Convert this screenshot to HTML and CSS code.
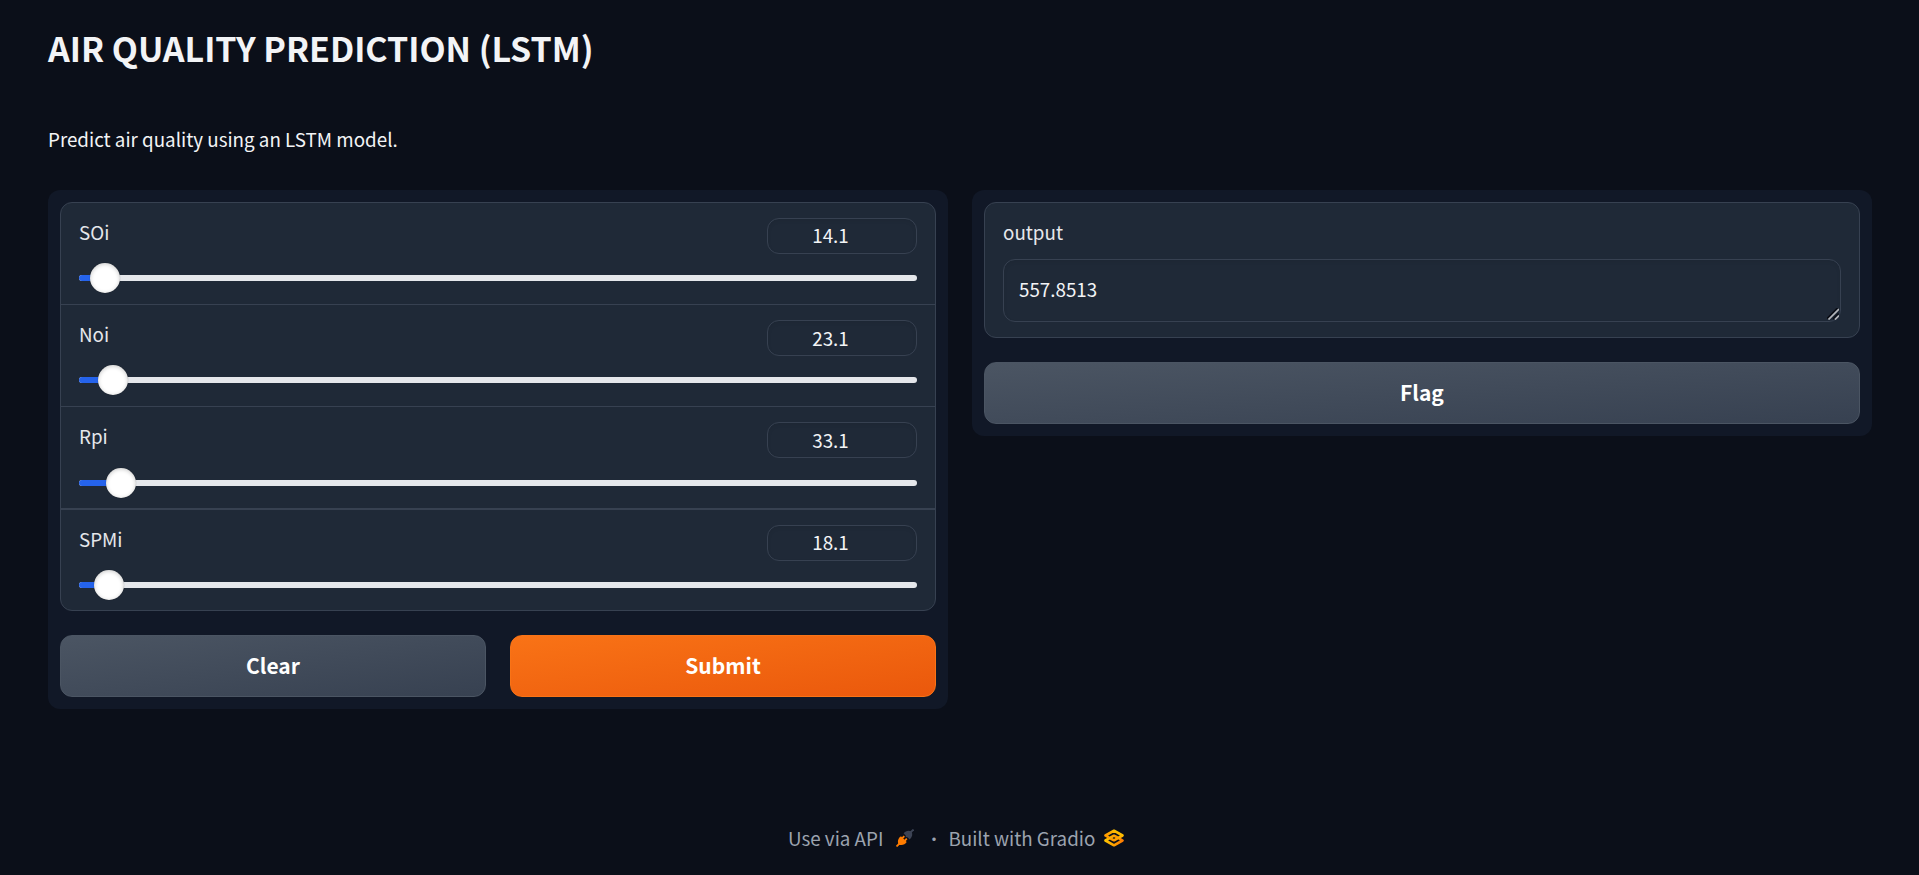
FILE: index.html
```html
<!DOCTYPE html>
<html lang="en">
<head>
<meta charset="utf-8">
<title>AIR QUALITY PREDICTION (LSTM)</title>
<link rel="stylesheet" href="styles.css">
</head>
<body>
<main class="app">
  <h1 class="title">AIR QUALITY PREDICTION (LSTM)</h1>
  <p class="description">Predict air quality using an LSTM model.</p>
  <div class="columns">
    <section class="panel">
      <div class="form">
        <div class="field field-first">
          <div class="head"><span class="label">SOi</span><span class="number">14.1</span></div>
          <div class="track"><span class="fill" style="width:26px"></span><span class="thumb"></span></div>
        </div>
        <div class="field">
          <div class="head"><span class="label">Noi</span><span class="number">23.1</span></div>
          <div class="track"><span class="fill" style="width:34px"></span><span class="thumb"></span></div>
        </div>
        <div class="field field-thick">
          <div class="head"><span class="label">Rpi</span><span class="number">33.1</span></div>
          <div class="track"><span class="fill" style="width:42px"></span><span class="thumb"></span></div>
        </div>
        <div class="field field-last">
          <div class="head"><span class="label">SPMi</span><span class="number">18.1</span></div>
          <div class="track"><span class="fill" style="width:30px"></span><span class="thumb"></span></div>
        </div>
      </div>
      <div class="buttons">
        <button class="btn">Clear</button>
        <button class="btn btn-primary">Submit</button>
      </div>
    </section>
    <section class="panel">
      <div class="output">
        <label class="label" for="out">output</label>
        <div class="textwrap">
          <textarea class="textbox" id="out" readonly>557.8513</textarea>
          <svg class="grip" viewBox="0 0 12 12"><path d="M0 10.500L10.500 0M6 11L11.500 5.500" stroke="#080b12" stroke-width="1.500"/><path d="M1.500 11.500L12 1M8 11.500L12 7.500" stroke="#b4b6ba" stroke-width="1.700"/></svg>
        </div>
      </div>
      <button class="btn">Flag</button>
    </section>
  </div>
  <footer class="footer">
    <span class="api">Use via API</span>
    <svg class="plug" viewBox="0 0 18 18"><path d="M.500 17.500l3.500-3.500" stroke="#ff7c00" stroke-width="1.800"/><path d="M5 7.300L10.700 13C9 16 5.200 16.800 2.600 15.400C1.200 12.800 2 9 5 7.300Z" fill="#ff7c00"/><path d="M6 9.500l2.300-2.300M8.500 12l2.300-2.300" stroke="#ff7c00" stroke-width="1.800"/><path d="M7.600 4.300C9.600 1.600 13 1 15.400 2.600C17 5 16.400 8.400 13.700 10.400L11.500 8.200L9.800 8L9.700 6.400Z" fill="#3c4354"/><path d="M14.500 3.500L17.500 .500" stroke="#3c4354" stroke-width="1.800"/></svg>
    <span class="dot">·</span>
    <span class="built">Built with Gradio</span>
    <svg class="logo" viewBox="0 0 20 18" fill="none" stroke-width="2.600" stroke-linejoin="round"><defs><linearGradient id="g" x1="0" y1="1" x2="1" y2="0"><stop offset="0" stop-color="#ff9000"/><stop offset=".5" stop-color="#ffa600"/><stop offset="1" stop-color="#ffd000"/></linearGradient><linearGradient id="h" x1="0" y1="0" x2="1" y2="0"><stop offset="0" stop-color="#ffc400"/><stop offset="1" stop-color="#ff7c00"/></linearGradient></defs><path d="M13.500 8.500L10 6.700L1.500 11.500L10 16.300L18.500 11.500L15 9.300" stroke="url(#h)"/><path d="M6.500 9.500L10 11.300L18.500 6.500L10 1.700L1.500 6.500L5 8.700" stroke="url(#g)"/></svg>
  </footer>
</main>
</body>
</html>
```
FILE: styles.css
```css
* { box-sizing: border-box; }
body {
  margin: 0;
  background: #0b0f19;
  color: #f3f4f6;
  font-family: "Noto Sans CJK SC", "Noto Sans", sans-serif;
  font-size: 18.8px;
}
.app { height: 875px; padding: 23px 47px 0 48px; overflow: hidden; }
.title { margin: 0; height: 50px; line-height: 50px; font-size: 34px; font-weight: 700; letter-spacing: -.04px; }
.description { margin: 51px 0 0; height: 30px; line-height: 30px; }
.columns {
  display: grid;
  grid-template-columns: 900px 900px;
  gap: 24px;
  align-items: start;
  margin-top: 36px;
}
.panel { display: flex; flex-direction: column; gap: 24px; padding: 12px; border-radius: 12px; background: #111827; }
.form { border: 1px solid #374151; border-radius: 12px; background: #1f2937; }
.field { height: 102px; padding: 15px 18px 0; border-bottom: 1px solid #374151; }
.field-thick { height: 103px; border-bottom-width: 2px; }
.field-thick .track { margin-top: 22px; }
.field-last { height: 100px; border-bottom: 0; }
.head { display: flex; justify-content: space-between; height: 36px; }
.label { line-height: 28px; color: #e5e7eb; }
.number {
  width: 150px;
  height: 36px;
  padding-right: 23px;
  border: 1px solid #374151;
  border-radius: 12px;
  box-shadow: inset 0 2px 4px rgba(0, 0, 0, .06);
  line-height: 33px;
  text-align: center;
}
.field-first .number, .field-last .number { line-height: 31px; }
.track { display: flex; align-items: center; height: 6px; margin-top: 21px; border-radius: 3px; background: #e5e7eb; }
.fill { flex: none; height: 6px; border-radius: 3px 0 0 3px; background: #2563eb; }
.thumb { flex: none; width: 30px; height: 30px; margin-left: -15px; border-radius: 50%; background: #fff; box-shadow: inset 0 1px 4px rgba(0, 0, 0, .22), 0 0 1px rgba(0, 0, 0, .4); }
.buttons { display: grid; grid-template-columns: 1fr 1fr; gap: 24px; }
.btn {
  height: 62px;
  padding: 0 0 2px;
  border: 1px solid #4b5563;
  border-radius: 12px;
  background: linear-gradient(to bottom right, #4b5563, #374151);
  color: #fff;
  font: 700 21px/56px "Noto Sans CJK SC", "Noto Sans", sans-serif;
}
.btn-primary { border-color: #f97316; background: linear-gradient(to bottom right, #f97316, #ea580c); }
.output { height: 136px; padding: 15px 18px; border: 1px solid #374151; border-radius: 12px; background: #1f2937; }
.output .label { display: block; }
.textwrap { position: relative; margin-top: 13px; }
.textbox {
  display: block;
  width: 838px;
  height: 63px;
  margin: 0;
  padding: 14px 15px;
  border: 1px solid #374151;
  border-radius: 12px;
  outline: 0;
  background: #1f2937;
  box-shadow: inset 0 2px 4px rgba(0, 0, 0, .06);
  color: #f3f4f6;
  font: 18.8px/30px "Noto Sans CJK SC", "Noto Sans", sans-serif;
  overflow: hidden;
  resize: none;
}
.grip { position: absolute; right: 2px; bottom: 2px; width: 12px; height: 12px; }
.footer { display: flex; align-items: center; height: 30px; margin: 114px 0 0 740px; color: #9ca3af; line-height: 30px; }
.api, .dot, .built { height: 30px; }
.plug { width: 18px; height: 18px; margin-left: 13px; }
.dot { width: 5px; margin-left: 17px; display: flex; justify-content: center; font-size: 16px; }
.built { margin-left: 12px; }
.logo { width: 20px; height: 18px; margin-left: 9px; }
```
